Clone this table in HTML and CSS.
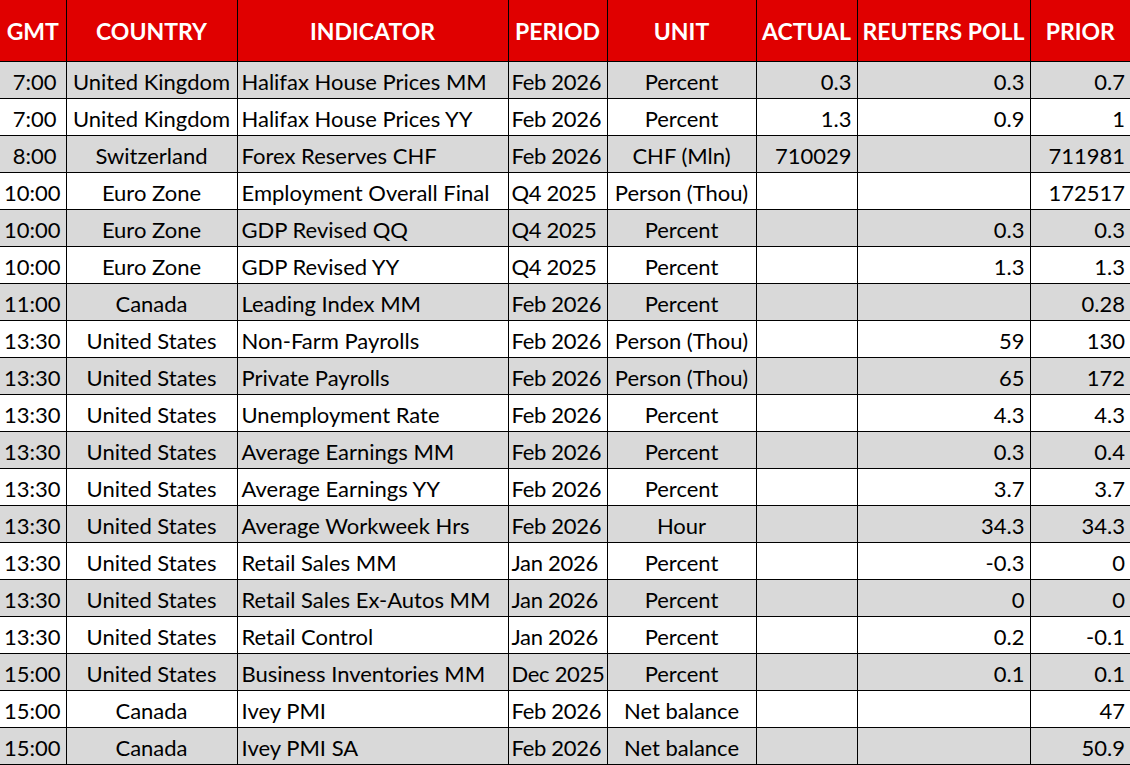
FILE: index.html
```html
<!DOCTYPE html>
<html lang="en">
<head>
<meta charset="utf-8">
<title>Economic Calendar</title>
<link rel="stylesheet" href="styles.css">
</head>
<body>
<table class="cal">
  <colgroup>
    <col class="c-gmt"><col class="c-country"><col class="c-ind"><col class="c-period"><col class="c-unit"><col class="c-actual"><col class="c-poll"><col class="c-prior">
  </colgroup>
  <thead>
    <tr><th>GMT</th><th>COUNTRY</th><th>INDICATOR</th><th>PERIOD</th><th>UNIT</th><th>ACTUAL</th><th>REUTERS POLL</th><th>PRIOR</th></tr>
  </thead>
  <tbody>
    <tr class="g"><td class="t">7:00</td><td class="c">United Kingdom</td><td class="l">Halifax House Prices MM</td><td class="p">Feb 2026</td><td class="c">Percent</td><td class="n">0.3</td><td class="n">0.3</td><td class="n">0.7</td></tr>
    <tr><td class="t">7:00</td><td class="c">United Kingdom</td><td class="l">Halifax House Prices YY</td><td class="p">Feb 2026</td><td class="c">Percent</td><td class="n">1.3</td><td class="n">0.9</td><td class="n">1</td></tr>
    <tr class="g"><td class="t">8:00</td><td class="c">Switzerland</td><td class="l">Forex Reserves CHF</td><td class="p">Feb 2026</td><td class="c">CHF (Mln)</td><td class="n">710029</td><td class="n"></td><td class="n">711981</td></tr>
    <tr><td class="t">10:00</td><td class="c">Euro Zone</td><td class="l">Employment Overall Final</td><td class="p">Q4 2025</td><td class="c">Person (Thou)</td><td class="n"></td><td class="n"></td><td class="n">172517</td></tr>
    <tr class="g"><td class="t">10:00</td><td class="c">Euro Zone</td><td class="l">GDP Revised QQ</td><td class="p">Q4 2025</td><td class="c">Percent</td><td class="n"></td><td class="n">0.3</td><td class="n">0.3</td></tr>
    <tr><td class="t">10:00</td><td class="c">Euro Zone</td><td class="l">GDP Revised YY</td><td class="p">Q4 2025</td><td class="c">Percent</td><td class="n"></td><td class="n">1.3</td><td class="n">1.3</td></tr>
    <tr class="g"><td class="t">11:00</td><td class="c">Canada</td><td class="l">Leading Index MM</td><td class="p">Feb 2026</td><td class="c">Percent</td><td class="n"></td><td class="n"></td><td class="n">0.28</td></tr>
    <tr><td class="t">13:30</td><td class="c">United States</td><td class="l">Non-Farm Payrolls</td><td class="p">Feb 2026</td><td class="c">Person (Thou)</td><td class="n"></td><td class="n">59</td><td class="n">130</td></tr>
    <tr class="g"><td class="t">13:30</td><td class="c">United States</td><td class="l">Private Payrolls</td><td class="p">Feb 2026</td><td class="c">Person (Thou)</td><td class="n"></td><td class="n">65</td><td class="n">172</td></tr>
    <tr><td class="t">13:30</td><td class="c">United States</td><td class="l">Unemployment Rate</td><td class="p">Feb 2026</td><td class="c">Percent</td><td class="n"></td><td class="n">4.3</td><td class="n">4.3</td></tr>
    <tr class="g"><td class="t">13:30</td><td class="c">United States</td><td class="l">Average Earnings MM</td><td class="p">Feb 2026</td><td class="c">Percent</td><td class="n"></td><td class="n">0.3</td><td class="n">0.4</td></tr>
    <tr><td class="t">13:30</td><td class="c">United States</td><td class="l">Average Earnings YY</td><td class="p">Feb 2026</td><td class="c">Percent</td><td class="n"></td><td class="n">3.7</td><td class="n">3.7</td></tr>
    <tr class="g"><td class="t">13:30</td><td class="c">United States</td><td class="l">Average Workweek Hrs</td><td class="p">Feb 2026</td><td class="c">Hour</td><td class="n"></td><td class="n">34.3</td><td class="n">34.3</td></tr>
    <tr><td class="t">13:30</td><td class="c">United States</td><td class="l">Retail Sales MM</td><td class="p">Jan 2026</td><td class="c">Percent</td><td class="n"></td><td class="n">-0.3</td><td class="n">0</td></tr>
    <tr class="g"><td class="t">13:30</td><td class="c">United States</td><td class="l">Retail Sales Ex-Autos MM</td><td class="p">Jan 2026</td><td class="c">Percent</td><td class="n"></td><td class="n">0</td><td class="n">0</td></tr>
    <tr><td class="t">13:30</td><td class="c">United States</td><td class="l">Retail Control</td><td class="p">Jan 2026</td><td class="c">Percent</td><td class="n"></td><td class="n">0.2</td><td class="n">-0.1</td></tr>
    <tr class="g"><td class="t">15:00</td><td class="c">United States</td><td class="l">Business Inventories MM</td><td class="p">Dec 2025</td><td class="c">Percent</td><td class="n"></td><td class="n">0.1</td><td class="n">0.1</td></tr>
    <tr><td class="t">15:00</td><td class="c">Canada</td><td class="l">Ivey PMI</td><td class="p">Feb 2026</td><td class="c">Net balance</td><td class="n"></td><td class="n"></td><td class="n">47</td></tr>
    <tr class="g"><td class="t">15:00</td><td class="c">Canada</td><td class="l">Ivey PMI SA</td><td class="p">Feb 2026</td><td class="c">Net balance</td><td class="n"></td><td class="n"></td><td class="n">50.9</td></tr>
  </tbody>
</table>
</body>
</html>
```

FILE: styles.css
```css
html, body {
  margin: 0;
  padding: 0;
  background: #ffffff;
}

.cal {
  border-collapse: collapse;
  table-layout: fixed;
  width: 1130px;
  font-family: Lato, "Liberation Sans", sans-serif;
  color: #000000;
}

.c-gmt { width: 66px; }
.c-country { width: 171px; }
.c-ind { width: 271px; }
.c-period { width: 99px; }
.c-unit { width: 149px; }
.c-actual { width: 101px; }
.c-poll { width: 173px; }
.c-prior { width: 100px; }

.cal th,
.cal td {
  border-right: 1px solid #000000;
  border-bottom: 1px solid #000000;
  padding: 0 4px;
  white-space: nowrap;
  overflow: hidden;
  line-height: 1;
}

.cal th:last-child,
.cal td:last-child {
  border-right: none;
}

.cal th {
  background: #e00000;
  color: #ffffff;
  font-weight: 700;
  font-size: 23px;
  height: 59px;
  text-align: center;
  vertical-align: middle;
  padding-top: 2px;
  padding-bottom: 0;
}

.cal td {
  height: 33px;
  font-size: 22px;
  vertical-align: middle;
  padding-top: 3px;
  padding-bottom: 0;
}

.cal tr.g td {
  background: #d9d9d9;
}

.cal td.t { text-align: right; padding-right: 9px; }
.cal td.c { text-align: center; }
.cal td.l { text-align: left; }
.cal td.p { text-align: left; padding-left: 3px; letter-spacing: -0.3px; }
.cal td.n { text-align: right; padding-right: 5px; }
```
